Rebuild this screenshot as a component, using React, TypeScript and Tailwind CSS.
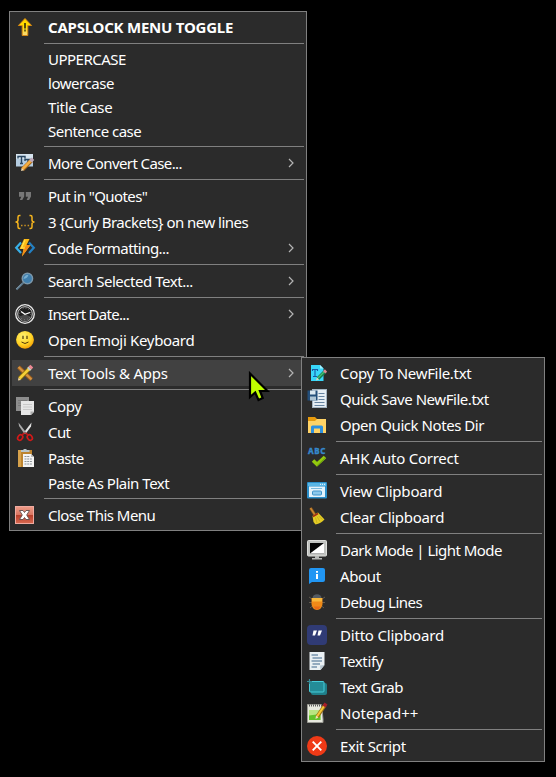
import type { ReactNode } from "react";

type Item = {
  label: string;
  icon?: ReactNode;
  bold?: boolean;
  arrow?: boolean;
  active?: boolean;
  tracking?: string;
};

const icons = {
  capsArrow: (
    <>
      <defs>
        <linearGradient id="caps" x1="0" y1="0" x2="0" y2="1">
          <stop offset="0" stopColor="#ffd000" />
          <stop offset="0.45" stopColor="#ffe000" />
          <stop offset="1" stopColor="#f8d880" />
        </linearGradient>
      </defs>
      <path d="M12 3.500L18.600 10.500H14.800V20.500H9.200V10.500H5.400Z" fill="url(#caps)" stroke="#d98a10" strokeWidth="1" />
      <path d="M12 8V13.500" stroke="#3b3008" strokeWidth="1.700" />
      <path d="M12 14.500V16.500" stroke="#3b3008" strokeWidth="1.400" />
    </>
  ),
  textCase: (
    <>
      <rect x="3" y="3" width="17" height="12.500" fill="#b4cce0" />
      <rect x="3" y="3" width="17" height="5" fill="#d5e3ee" />
      <path d="M5 7.500V5.500H12V7.500M8.500 5.500V12.500M7 12.500H10M12 10V8.500H18V10M15 8.500V13" fill="none" stroke="#294660" strokeWidth="1.400" />
      <path d="M9.500 18.500L18.500 9.500" stroke="#a76616" strokeWidth="4" />
      <path d="M9.500 18L18 9.500" stroke="#f5ae42" strokeWidth="2.500" />
      <path d="M17.500 10.300L20 7.800" stroke="#bca6b8" strokeWidth="3.500" />
      <path d="M8 20L8.700 17L11 19.300Z" fill="#f6ddb0" />
    </>
  ),
  quotes: (
    <path d="M6 8H11.200V12.500L9.300 16H6.800L8.300 12.700H6ZM12.800 8H18V12.500L16.100 16H13.600L15.100 12.700H12.800Z" fill="#777" />
  ),
  brackets: (
    <>
      <path d="M7.500 5.500H6.500Q5 5.500 5 7V10Q5 12 2.500 12Q5 12 5 14V17Q5 18.500 6.500 18.500H7.500M16.500 5.500H17.500Q19 5.500 19 7V10Q19 12 21.500 12Q19 12 19 14V17Q19 18.500 17.500 18.500H16.500" fill="none" stroke="#f6b51e" strokeWidth="1.500" />
      <path d="M8 15.500H9.500M11.300 15.500H12.800M14.600 15.500H16.100" stroke="#c99222" strokeWidth="1.300" />
    </>
  ),
  bolt: (
    <>
      <path d="M8 6.500L3.200 11.800L8 17" fill="none" stroke="#38b0e8" strokeWidth="2.200" />
      <path d="M16 6.500L20.800 11.800L16 17" fill="none" stroke="#2380c4" strokeWidth="2.200" />
      <path d="M11 3H16.500L13.500 9H17.500L9 20.500L10.500 13H6.500Z" fill="#fdbb16" />
      <path d="M13.500 9H17.500L9 20.500L10.700 13Z" fill="#f28b18" />
      <path d="M12 4L8.500 12H12" stroke="#ffe14f" fill="none" strokeWidth="1.200" />
    </>
  ),
  magnifier: (
    <>
      <path d="M10.500 13.500L3.500 20.500" stroke="#58758a" strokeWidth="2" />
      <path d="M8.500 15L3 20.200" stroke="#91a7b5" strokeWidth="0.800" />
      <circle cx="14.400" cy="9.500" r="5.200" fill="#3f7eac" stroke="#7c98ab" strokeWidth="1.400" />
      <path d="M10.500 10Q11 6 15.500 5.800Q14.500 9.500 10.500 10Z" fill="#78aed0" />
    </>
  ),
  clock: (
    <>
      <circle cx="12" cy="12" r="9.300" fill="#292929" stroke="#e8e8e8" strokeWidth="1.300" />
      <circle cx="12" cy="12" r="7.300" fill="#1d1d1d" stroke="#c8c8c8" strokeWidth="1" />
      <path d="M6 15A6.400 6.400 0 0 0 18 15L12 12Z" fill="#494949" />
      <circle cx="12" cy="12" r="5.700" fill="none" stroke="#a0a0a0" strokeWidth="0.800" strokeDasharray="0.700 2.280" />
      <path d="M8 9.500L12 12.300L17 10.500" fill="none" stroke="#fff" strokeWidth="1.300" />
    </>
  ),
  smile: (
    <>
      <defs>
        <radialGradient id="smile" cx="0.400" cy="0.300" r="0.750">
          <stop offset="0" stopColor="#fff173" />
          <stop offset="0.600" stopColor="#ffd528" />
          <stop offset="1" stopColor="#f39a00" />
        </radialGradient>
      </defs>
      <circle cx="12" cy="11.800" r="8.900" fill="url(#smile)" />
      <path d="M10 7.800V11M14 7.800V11" stroke="#4b3609" strokeWidth="1.200" />
      <path d="M8.500 14Q12 17 15.500 14" fill="none" stroke="#513709" strokeWidth="1" />
    </>
  ),
  tools: (
    <>
      <path d="M5.500 6L18.500 18.500" stroke="#9c5d1c" strokeWidth="4" />
      <path d="M5.500 6L18.500 18.500" stroke="#d49342" strokeWidth="2.200" />
      <path d="M6.500 17.500L17 7" stroke="#8a6b09" strokeWidth="4.200" />
      <path d="M6.500 17.500L17 7" stroke="#f4cf37" strokeWidth="2.600" />
      <path d="M15.500 8.500L17 7" stroke="#c0cbd0" strokeWidth="4" />
      <path d="M17 7L18.800 5.200" stroke="#ed8895" strokeWidth="4" />
      <path d="M5 19.500L5.500 16.500L8 19Z" fill="#efd59d" />
    </>
  ),
  copy: (
    <>
      <rect x="3" y="3" width="13" height="14" fill="#8d8d8d" />
      <path d="M5 6.500H14M5 9H14M5 11.500H14" stroke="#777" />
      <path d="M8 7H21V18L18 21H8Z" fill="#e6e6e6" />
      <path d="M10 10.500H19M10 13H19M10 15.500H19" stroke="#c8c8c8" />
      <path d="M21 17.500L17.500 21V17.500Z" fill="#a9a9a9" />
    </>
  ),
  cut: (
    <>
      <path d="M5.500 2.500L6 6L11.500 14L13.500 13Z" fill="#aaa" />
      <path d="M18.500 2.500L18 6.500L12.500 14L10.500 13Z" fill="#e3e3e3" />
      <circle cx="12" cy="12.500" r="1" fill="#777" />
      <ellipse cx="7.200" cy="17.500" rx="2.300" ry="3" fill="none" stroke="#d31919" strokeWidth="1.600" transform="rotate(35 7.200 17.500)" />
      <ellipse cx="16.800" cy="17.500" rx="2.300" ry="3" fill="none" stroke="#d31919" strokeWidth="1.600" transform="rotate(-35 16.800 17.500)" />
      <path d="M9 14.800L11.500 13M15 14.800L12.500 13" stroke="#bd1919" strokeWidth="1.600" />
    </>
  ),
  paste: (
    <>
      <rect x="5" y="4" width="14" height="17" fill="#bd842f" />
      <rect x="5" y="4" width="3" height="17" fill="#d6a14b" />
      <path d="M8 6V4H10L11 3H13L14 4H16.500V6Z" fill="#b9c5c9" />
      <path d="M10 8H18L21 11V21H10Z" fill="#f4f4f4" />
      <path d="M11.500 10.500H17M11.500 13H19.500M11.500 15.500H19.500M11.500 18H19.500" stroke="#8d9499" strokeWidth="1" strokeDasharray="2 0.700" />
      <path d="M18 8V11H21Z" fill="#bbb" />
    </>
  ),
  close: (
    <>
      <defs>
        <linearGradient id="close" x1="0" y1="0" x2="0" y2="1">
          <stop offset="0" stopColor="#ee9c88" />
          <stop offset="0.480" stopColor="#d97662" />
          <stop offset="0.500" stopColor="#b43c29" />
          <stop offset="1" stopColor="#d96a50" />
        </linearGradient>
      </defs>
      <rect x="2.500" y="3.500" width="18" height="17" fill="url(#close)" stroke="#efaaa0" />
      <path d="M6.500 7.500H10L11.500 9.500L13 7.500H16.500L13.700 12L16.500 16.500H13L11.500 14.500L10 16.500H6.500L9.300 12Z" fill="#fff" stroke="#604d4c" strokeWidth="0.900" />
    </>
  ),
  newFile: (
    <>
      <path d="M6 4H15L18.500 7.500V20H6Z" fill="#38d7fa" />
      <path d="M15 4V7.500H18.500Z" fill="#a8f2ff" />
      <path d="M7.500 10V8.500H12.500V10M10 8.500V15.500M8 15.500H12" fill="none" stroke="#1959a5" strokeWidth="1.100" />
      <path d="M13 17.500L19.500 11" stroke="#167d4a" strokeWidth="3.600" />
      <path d="M13 17L19 11" stroke="#43bd75" strokeWidth="1.500" />
      <path d="M19.200 11.300L21 9.500" stroke="#dd8c95" strokeWidth="3.200" />
      <path d="M11 19.500L12 16.500L14 18.500Z" fill="#ead9b2" />
    </>
  ),
  quickSave: (
    <>
      <rect x="7.500" y="2.500" width="14" height="18" fill="#e6eef4" stroke="#a5b5c2" />
      <path d="M13.500 6.500H19.500M13.500 9.500H19.500M13.500 12.500H19.500M9.500 15.500H19.500M9.500 18.500H19.500" stroke="#6683a0" />
      <rect x="2.500" y="3.500" width="10" height="10" fill="#234e7a" />
      <rect x="5" y="3.500" width="5.500" height="4" fill="#dce8f0" />
      <rect x="5" y="9.500" width="6" height="4" fill="#aec5d5" />
    </>
  ),
  folder: (
    <>
      <path d="M3 4H10L12 6H21V20H3Z" fill="#e89b0d" />
      <path d="M3 8H10L12 6H21V20H3Z" fill="#ffd366" />
      <path d="M6 20V14Q6 12.500 7.500 12.500H16.500Q18 12.500 18 14V20H15V15.500H9V20Z" fill="#2f91df" />
    </>
  ),
  abc: (
    <>
      <text x="3" y="8" textLength="17.500" fontFamily="Noto Sans, sans-serif" fontSize="8" fontWeight="800" stroke="#3587ca" strokeWidth="0.300" fill="#3587ca">ABC</text>
      <path d="M8 14.500L12 18.300L20 11" fill="none" stroke="#93c90e" strokeWidth="3.600" />
      <path d="M12 19.700L20.500 11.700" fill="none" stroke="#6fa70b" strokeWidth="1" />
    </>
  ),
  viewWindow: (
    <>
      <rect x="2" y="3" width="20" height="16.500" rx="1" fill="#2b8fca" />
      <rect x="3" y="4" width="18" height="3" fill="#5ab6e5" />
      <path d="M15 5.300H20" stroke="#fff" strokeDasharray="1 1" />
      <rect x="4" y="7.500" width="16" height="10.500" fill="#e4f3fb" />
      <path d="M6 9.500H17" stroke="#79bade" />
      <rect x="7.500" y="12" width="9" height="4" rx="1" fill="#8cc9ec" stroke="#3c93cb" />
    </>
  ),
  broom: (
    <>
      <path d="M5.500 3L10 10" stroke="#87511a" strokeWidth="3" />
      <path d="M5.500 3L10 10" stroke="#c88832" strokeWidth="1.500" />
      <path d="M7.500 11L13 7.500L19.500 14.500Q16 18.500 10.500 19.500L8.500 17Z" fill="#e4cc24" />
      <path d="M8 11.500L13 8.500" stroke="#a42c13" strokeWidth="1.600" />
      <path d="M10.500 12.500L12 18M12 11.500L15 16.500M13.500 11L17.500 14.500" stroke="#bda51a" strokeWidth="0.700" />
    </>
  ),
  monitor: (
    <>
      <rect x="2.500" y="2.500" width="19" height="15.500" rx="1" fill="#c1c3c0" stroke="#dedfdc" />
      <rect x="5" y="5" width="14" height="10.500" fill="#050505" />
      <path d="M19 5V15.500H5Z" fill="#fff" />
      <path d="M10 18H14V20H17V21.500H7V20H10Z" fill="#b7b9b7" />
    </>
  ),
  info: (
    <>
      <path d="M6 4H18Q20 4 20 6V16Q20 18 18 18H7L4 20V6Q4 4 6 4Z" fill="#2196f3" />
      <path d="M11 7H13V8.800H11ZM11 10H13V15H11Z" fill="#fff" />
    </>
  ),
  bug: (
    <>
      <path d="M4 7L7 9M4 12.500H7M5 18L8 15.500M20 7L17 9M20 12.500H17M19 18L16 15.500" stroke="#625b50" strokeWidth="1" />
      <path d="M7.500 8Q8 4.300 12 4.300Q16 4.300 16.500 8Z" fill="#555b61" />
      <path d="M6.500 8H17.500V14Q17 19.500 12 20Q7 19.500 6.500 14Z" fill="#f08a18" />
      <path d="M7 8H17V11.500H7Z" fill="#f8b83b" />
      <path d="M8.500 16.500H15.500Q14.500 19 12 19.500Q9.500 19 8.500 16.500Z" fill="#e86b16" />
    </>
  ),
  ditto: (
    <>
      <rect x="2" y="2" width="20" height="20" rx="4" fill="#303b75" />
      <path d="M8.500 7.500H12L10 12.500H7.500ZM13.500 7.500H17L15 12.500H12.500Z" fill="#fff" />
    </>
  ),
  textify: (
    <>
      <path d="M4.500 3H19.500V16L15.500 21H4.500Z" fill="#eaf0f3" />
      <path d="M6.500 6H13M7.500 9H17M6.500 12H17M7.500 15H15M6.500 18H12" stroke="#7894ae" strokeWidth="1.500" />
      <path d="M19.500 16L15.500 21L15 16.500Z" fill="#b7c5cf" />
    </>
  ),
  textGrab: (
    <>
      <rect x="6" y="8" width="16" height="12" rx="2" fill="#207f89" />
      <rect x="4.500" y="6.500" width="14.500" height="10.500" rx="1" fill="#248c97" stroke="#47ccd9" strokeWidth="1" />
      <path d="M4.500 4V9M2 6.500H7" stroke="#398c97" strokeWidth="1.200" />
    </>
  ),
  notepad: (
    <>
      <path d="M2.500 3.500H16.500L18 18V21.500H2.500Z" fill="#e8e9df" stroke="#9b9b94" />
      <path d="M4 9H15.500V19H4Z" fill="#b9e681" />
      <path d="M4 14.500L15.500 13V19H4Z" fill="#62c32b" />
      <path d="M4 4.500H17" stroke="#5c5c5c" strokeWidth="2" strokeDasharray="1 1" />
      <path d="M12 16L20 4" stroke="#9c7114" strokeWidth="3.800" />
      <path d="M12 15.500L19.500 4.500" stroke="#f6c938" strokeWidth="2" />
      <path d="M19 5.500L21 2.500" stroke="#a61e28" strokeWidth="3.500" />
      <path d="M10.500 18L11 14.500L13.500 16.500Z" fill="#f2dfbb" />
    </>
  ),
  exit: (
    <>
      <circle cx="12" cy="12" r="10" fill="#f03a17" />
      <path d="M7.700 7.700L16.300 16.300M16.300 7.700L7.700 16.300" stroke="#fff" strokeWidth="1.900" />
    </>
  ),
};

const mainMenu: Item[][] = [
  [{ label: "CAPSLOCK MENU TOGGLE", icon: icons.capsArrow, bold: true, tracking: "tracking-[-0.230px]" }],
  [
    { label: "UPPERCASE", tracking: "tracking-[-0.500px]" },
    { label: "lowercase", tracking: "tracking-[-0.450px]" },
    { label: "Title Case", tracking: "tracking-[-0.300px]" },
    { label: "Sentence case", tracking: "tracking-[-0.520px]" },
  ],
  [{ label: "More Convert Case...", icon: icons.textCase, arrow: true, tracking: "tracking-[-0.600px]" }],
  [
    { label: 'Put in "Quotes"', icon: icons.quotes, tracking: "tracking-[-0.580px]" },
    { label: "3 {Curly Brackets} on new lines", icon: icons.brackets, tracking: "tracking-[-0.530px]" },
    { label: "Code Formatting...", icon: icons.bolt, arrow: true, tracking: "tracking-[-0.550px]" },
  ],
  [{ label: "Search Selected Text...", icon: icons.magnifier, arrow: true, tracking: "tracking-[-0.460px]" }],
  [
    { label: "Insert Date...", icon: icons.clock, arrow: true, tracking: "tracking-[-0.700px]" },
    { label: "Open Emoji Keyboard", icon: icons.smile, tracking: "tracking-[-0.330px]" },
  ],
  [{ label: "Text Tools & Apps", icon: icons.tools, arrow: true, active: true, tracking: "tracking-[-0.200px]" }],
  [
    { label: "Copy", icon: icons.copy },
    { label: "Cut", icon: icons.cut, tracking: "tracking-[-0.600px]" },
    { label: "Paste", icon: icons.paste, tracking: "tracking-[-0.600px]" },
    { label: "Paste As Plain Text", tracking: "tracking-[-0.480px]" },
  ],
  [{ label: "Close This Menu", icon: icons.close, tracking: "tracking-[-0.520px]" }],
];

const subMenu: Item[][] = [
  [
    { label: "Copy To NewFile.txt", icon: icons.newFile, tracking: "tracking-[-0.320px]" },
    { label: "Quick Save NewFile.txt", icon: icons.quickSave },
    { label: "Open Quick Notes Dir", icon: icons.folder },
  ],
  [{ label: "AHK Auto Correct", icon: icons.abc, tracking: "tracking-[-0.270px]" }],
  [
    { label: "View Clipboard", icon: icons.viewWindow, tracking: "tracking-[-0.200px]" },
    { label: "Clear Clipboard", icon: icons.broom, tracking: "tracking-[-0.300px]" },
  ],
  [
    { label: "Dark Mode | Light Mode", icon: icons.monitor, tracking: "tracking-[-0.540px]" },
    { label: "About", icon: icons.info, tracking: "tracking-[-0.350px]" },
    { label: "Debug Lines", icon: icons.bug, tracking: "tracking-[-0.500px]" },
  ],
  [
    { label: "Ditto Clipboard", icon: icons.ditto, tracking: "tracking-[-0.200px]" },
    { label: "Textify", icon: icons.textify, tracking: "tracking-[-0.350px]" },
    { label: "Text Grab", icon: icons.textGrab },
    { label: "Notepad++", icon: icons.notepad, tracking: "tracking-[0px]" },
  ],
  [{ label: "Exit Script", icon: icons.exit, tracking: "tracking-[-0.350px]" }],
];

function MenuRow({ item }: { item: Item }) {
  return (
    <div
      className={`flex items-center pr-1.5 pl-px ${item.icon ? "h-[26px]" : "h-6"} ${item.active ? "bg-[#414141]" : ""}`}
    >
      <div className="h-6 w-6 shrink-0">
        {item.icon && (
          <svg viewBox="0 0 24 24" className="h-6 w-6">
            {item.icon}
          </svg>
        )}
      </div>
      <span
        className={`ml-[11px] flex-1 whitespace-nowrap text-[15px] leading-6 ${item.bold ? "font-bold" : ""} ${item.tracking ?? "tracking-[-0.450px]"}`}
      >
        {item.label}
      </span>
      {item.arrow && (
        <svg viewBox="0 0 8 10" className="mr-[3px] h-2.5 w-2" fill="none" stroke="#b4b4b4" strokeWidth="1.200">
          <path d="M2 1L6 5L2 9" />
        </svg>
      )}
    </div>
  );
}

function Menu({ groups }: { groups: Item[][] }) {
  return (
    <div className="border border-[#808080] bg-[#2b2b2b] p-0.5">
      {groups.map((group, index) => (
        <div key={index}>
          {index > 0 && <div className="my-[3px] ml-8 h-px bg-[#808080]" />}
          {group.map((item) => (
            <MenuRow key={item.label} item={item} />
          ))}
        </div>
      ))}
    </div>
  );
}

export default function App() {
  return (
    <div className="relative h-[777px] w-[556px] overflow-hidden bg-black pt-[11px] pl-[9px] font-['Noto_Sans',sans-serif] text-white">
      <div className="w-[298px]">
        <Menu groups={mainMenu} />
      </div>
      <div className="absolute top-[357px] left-[301px] w-[244px]">
        <Menu groups={subMenu} />
      </div>
      <svg viewBox="0 0 22 32" className="absolute top-[371px] left-[248px] h-8 w-[22px]">
        <path d="M2 2.500V26L7.200 21.500L10.500 29L14.700 27L12 20H19.500Z" fill="#bfff00" stroke="#000" strokeWidth="2.200" />
      </svg>
    </div>
  );
}
